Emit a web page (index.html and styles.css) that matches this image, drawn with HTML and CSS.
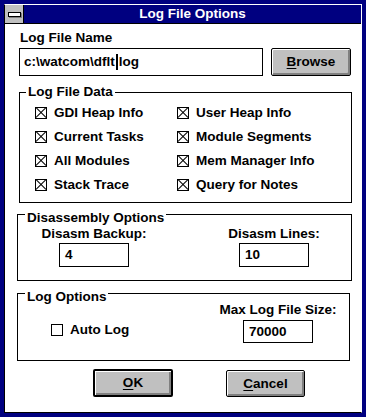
FILE: index.html
```html
<!DOCTYPE html>
<html lang="en">
<head>
    <meta charset="UTF-8">
    <title>Log File Options</title>
    <link rel="stylesheet" href="styles.css">
</head>
<body>
    <div class="window">
      <div class="frame">
        <div class="titlebar">
            <div class="sysmenu"><span class="sysbar"></span></div>
            <div class="title">Log File Options</div>
        </div>
        <div class="client">
            <div class="name-label">Log File Name</div>
            <div class="name-row">
                <div class="edit name-edit">c:\watcom\dflt<span class="caret"></span>log</div>
                <button class="btn browse"><u>B</u>rowse</button>
            </div>

            <fieldset class="group data">
                <legend>Log File Data</legend>
                <div class="check-grid">
                    <div class="check"><span class="box on"></span>GDI Heap Info</div>
                    <div class="check"><span class="box on"></span>User Heap Info</div>
                    <div class="check"><span class="box on"></span>Current Tasks</div>
                    <div class="check"><span class="box on"></span>Module Segments</div>
                    <div class="check"><span class="box on"></span>All Modules</div>
                    <div class="check"><span class="box on"></span>Mem Manager Info</div>
                    <div class="check"><span class="box on"></span>Stack Trace</div>
                    <div class="check"><span class="box on"></span>Query for Notes</div>
                </div>
            </fieldset>

            <fieldset class="group disasm">
                <legend>Disassembly Options</legend>
                <div class="disasm-cols">
                    <div class="field">
                        <div>Disasm Backup:</div>
                        <div class="edit small">4</div>
                    </div>
                    <div class="field">
                        <div>Disasm Lines:</div>
                        <div class="edit small">10</div>
                    </div>
                </div>
            </fieldset>

            <fieldset class="group logopts">
                <legend>Log Options</legend>
                <div class="log-cols">
                    <div class="check auto"><span class="box"></span>Auto Log</div>
                    <div class="field">
                        <div>Max Log File Size:</div>
                        <div class="edit small">70000</div>
                    </div>
                </div>
            </fieldset>

            <div class="buttons">
                <button class="btn default"><u>O</u>K</button>
                <button class="btn cancel"><u>C</u>ancel</button>
            </div>
        </div>
      </div>
    </div>
</body>
</html>
```

FILE: styles.css
```css
body {
    margin: 0;
    font-family: "Liberation Sans", Arial, sans-serif;
    font-size: 13.5px;
    font-weight: bold;
    line-height: 16px;
    color: #000;
}
.window {
    width: 366px;
    height: 417px;
    box-sizing: border-box;
    padding: 4px;
    background-color: #000080;
}
.frame {
    height: 409px;
    box-sizing: border-box;
    border-top: 1px solid #fff;
    border-right: 1px solid #fff;
    border-left: 1px solid #000;
    border-bottom: 1px solid #000;
    background-color: #fff;
    display: flex;
    flex-direction: column;
}
.titlebar {
    display: flex;
    height: 19px;
    box-sizing: border-box;
    border-bottom: 1px solid #000;
    background-color: #000080;
}
.sysmenu {
    width: 19px;
    box-sizing: border-box;
    border-right: 1px solid #000;
    background-color: #c0c0c0;
    display: flex;
    align-items: center;
    justify-content: center;
}
.sysbar {
    width: 11px;
    height: 3px;
    background-color: #fff;
    border: 1px solid #000;
    box-shadow: 1px 1px 0 #808080;
}
.title {
    flex: 1;
    color: #fff;
    text-align: center;
    line-height: 18px;
}
.client {
    flex: 1;
    padding: 6px 0 0 0;
}
.name-label {
    margin-left: 15px;
}
.name-row {
    display: flex;
    gap: 8px;
    margin: 2px 0 0 14px;
}
.edit {
    box-sizing: border-box;
    border: 1px solid #000;
    background-color: #fff;
    display: flex;
    align-items: center;
}
.name-edit {
    width: 244px;
    height: 28px;
    padding-left: 4px;
}
.caret {
    display: inline-block;
    width: 2px;
    height: 16px;
    margin: 0 1px;
    background-color: #000;
}
.btn {
    box-sizing: border-box;
    width: 80px;
    height: 28px;
    padding: 0;
    font: inherit;
    color: #000;
    background-color: #c0c0c0;
    border: 1px solid #000;
    border-radius: 2px;
    box-shadow: inset 1px 1px 0 #fff, inset -2px -2px 0 #808080;
}
.btn u {
    text-decoration-thickness: 1px;
    text-underline-offset: 2px;
}
.group {
    margin: 0;
    padding: 1px 0 5px 6px;
    border: 1px solid #000;
}
.group legend {
    padding: 0 2px;
}
.data {
    margin: 8px 9px 0 14px;
}
.check-grid {
    display: grid;
    grid-template-columns: 142px 142px;
    margin-left: 9px;
}
.check {
    display: flex;
    align-items: center;
    height: 24px;
}
.box {
    width: 12px;
    height: 12px;
    box-sizing: border-box;
    border: 1px solid #000;
    margin-right: 7px;
    position: relative;
    overflow: hidden;
}
.box.on::before,
.box.on::after {
    content: "";
    position: absolute;
    left: -2px;
    top: 4px;
    width: 14px;
    height: 1px;
    background-color: #000;
    transform: rotate(45deg);
}
.box.on::after {
    transform: rotate(-45deg);
}
.disasm {
    margin: -1px 9px 0 12px;
    padding: 0 0 13px 0;
}
.disasm legend {
    margin-left: 7px;
    padding: 8px 2px 0;
}
.disasm-cols {
    display: grid;
    grid-template-columns: 120px 120px;
    gap: 60px;
    padding-left: 16px;
}
.field {
    display: flex;
    flex-direction: column;
    align-items: center;
    gap: 1px;
    white-space: nowrap;
}
.small {
    width: 70px;
    height: 24px;
    padding-left: 5px;
}
.logopts {
    margin: 1px 11px 0 12px;
    padding: 0 0 17px 0;
}
.logopts legend {
    margin-left: 7px;
    padding: 7px 2px 0;
}
.log-cols {
    display: grid;
    grid-template-columns: 200px 120px;
    margin-top: -3px;
}
.log-cols .field {
    gap: 2px;
}
.log-cols .small {
    height: 23px;
}
.auto {
    align-self: end;
    padding-left: 33px;
    margin-bottom: 1px;
}
.buttons {
    display: flex;
    gap: 53px;
    margin: 8px 0 0 88px;
}
.btn.default {
    border-width: 2px;
    height: 28px;
}
.btn.cancel {
    width: 79px;
    height: 27px;
    margin-top: 1px;
}
```
